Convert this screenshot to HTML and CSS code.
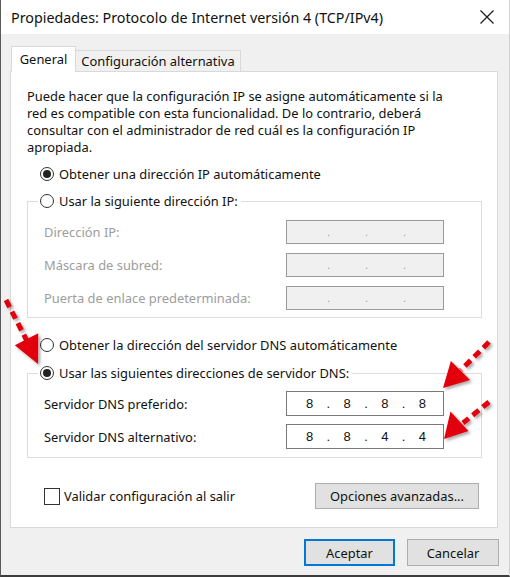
FILE: index.html
```html
<!DOCTYPE html>
<html lang="es">
<head>
<meta charset="utf-8">
<title>Propiedades</title>
<link rel="stylesheet" href="styles.css">
</head>
<body>
<div class="window">
  <div class="titlebar">
    <span class="title">Propiedades: Protocolo de Internet versión 4 (TCP/IPv4)</span>
    <svg class="close" width="14" height="14" viewBox="0 0 14 14"><path d="M0.5 0.5 L13.5 13.5 M13.5 0.5 L0.5 13.5" stroke="#1a1a1a" stroke-width="1.2" fill="none"/></svg>
  </div>
  <div class="body">
    <div class="tabs">
      <div class="tab active">General</div>
      <div class="tab">Configuración alternativa</div>
    </div>
    <div class="panel">
      <p class="desc">Puede hacer que la configuración IP se asigne automáticamente si la<br>red es compatible con esta funcionalidad. De lo contrario, deberá<br>consultar con el administrador de red cuál es la configuración IP<br>apropiada.</p>

      <div class="radio-row first"><span class="radio checked"></span><span>Obtener una dirección IP automáticamente</span></div>

      <fieldset class="group ip">
        <legend><span class="radio"></span><span>Usar la siguiente dirección IP:</span></legend>
        <div class="row"><span class="lbl disabled">Dirección IP:</span><span class="ipbox off"><i>.</i><i>.</i><i>.</i></span></div>
        <div class="row"><span class="lbl disabled">Máscara de subred:</span><span class="ipbox off"><i>.</i><i>.</i><i>.</i></span></div>
        <div class="row"><span class="lbl disabled">Puerta de enlace predeterminada:</span><span class="ipbox off"><i>.</i><i>.</i><i>.</i></span></div>
      </fieldset>

      <div class="radio-row dns"><span class="radio"></span><span>Obtener la dirección del servidor DNS automáticamente</span></div>

      <fieldset class="group dnsgroup">
        <legend><span class="radio checked"></span><span>Usar las siguientes direcciones de servidor DNS:</span></legend>
        <div class="row"><span class="lbl">Servidor DNS preferido:</span><span class="ipbox on"><b>8</b><i>.</i><b>8</b><i>.</i><b>8</b><i>.</i><b>8</b></span></div>
        <div class="row"><span class="lbl">Servidor DNS alternativo:</span><span class="ipbox on"><b>8</b><i>.</i><b>8</b><i>.</i><b>4</b><i>.</i><b>4</b></span></div>
      </fieldset>

      <div class="bottom-row">
        <label class="check"><span class="box"></span><span>Validar configuración al salir</span></label>
        <button class="btn adv">Opciones avanzadas...</button>
      </div>
    </div>
    <div class="footer">
      <button class="btn ok">Aceptar</button>
      <button class="btn">Cancelar</button>
    </div>
  </div>

  <svg class="arrows" width="510" height="577" viewBox="0 0 510 577">
    <defs>
      <filter id="sh" x="-20%" y="-20%" width="160%" height="160%">
        <feDropShadow dx="2" dy="2" stdDeviation="1.5" flood-color="#000" flood-opacity="0.35"/>
      </filter>
    </defs>
    <g filter="url(#sh)" fill="#e3000f" stroke="#e3000f">
      <line x1="6" y1="300" x2="27" y2="341" stroke-width="5" stroke-dasharray="8 5"/>
      <polygon points="38,364 14.8,345.3 38.2,333.3" stroke="none"/>
      <line x1="489" y1="342" x2="461" y2="370" stroke-width="5" stroke-dasharray="8 5"/>
      <polygon points="443,388 450.9,360.9 470.1,380.1" stroke="none"/>
      <line x1="489" y1="402" x2="463" y2="423" stroke-width="5" stroke-dasharray="8 5"/>
      <polygon points="444,439 450.5,411.5 468.5,431" stroke="none"/>
    </g>
  </svg>
</div>
</body>
</html>
```

FILE: styles.css
```css
* { box-sizing: border-box; }
html, body { margin: 0; padding: 0; background: #fff; }
body { font-family: "Noto Sans", "Open Sans", sans-serif; font-size: 12.9px; color: #111; }

.window {
  position: relative;
  width: 510px;
  height: 577px;
  background: #f0f0f0;
  border-left: 1px solid #5a5a5a;
  border-right: 1px solid #cfcfcf;
  border-bottom: 2px solid #3c3c3c;
  display: flex;
  flex-direction: column;
}

.titlebar {
  height: 34px;
  background: #fff;
  display: flex;
  align-items: center;
  justify-content: space-between;
  padding: 0 15px 0 10px;
}
.title { font-size: 14.3px; color: #111; }

.body { flex: 1; padding: 12px 0 0 9px; }

.tabs { display: flex; align-items: flex-end; height: 26px; margin-left: 1px; margin-bottom: -1px; }
.tab {
  height: 22px;
  padding: 0 4px;
  width: 165px;
  background: #f0f0f0;
  border: 1px solid #d9d9d9;
  border-left: none;
  display: flex;
  align-items: center;
  justify-content: center;
}
.tab.active {
  position: relative;
  z-index: 1;
  width: 65px;
  height: 26px;
  background: #fff;
  border-left: 1px solid #d9d9d9;
  border-bottom: none;
  padding-bottom: 2px;
}

.panel {
  width: 488px;
  height: 457px;
  background: #fff;
  border: 1px solid #d9d9d9;
  padding: 16px 10px 0 16px;
}

.desc { margin: 0; line-height: 17px; }

.radio-row { display: flex; align-items: center; height: 18px; padding-left: 13px; gap: 5px; }
.radio-row.first { margin-top: 9px; }
.radio-row.dns { margin-top: 18px; }

.radio {
  width: 14px; height: 14px;
  border: 1px solid #333;
  border-radius: 50%;
  background: #fff;
  display: inline-flex;
  align-items: center;
  justify-content: center;
  flex: none;
}
.radio.checked::after {
  content: "";
  width: 8px; height: 8px;
  border-radius: 50%;
  background: #222;
}

.group {
  margin: 9px 0 0 0;
  width: 455px;
  border: 1px solid #dcdcdc;
  padding: 10px 37px 7px 16px;
  min-inline-size: 0;
}
.group.dnsgroup { margin-top: 10px; padding-top: 9px; padding-bottom: 8px; }
.group legend {
  margin-left: -6px;
  padding: 0 3px 0 2px;
  height: 18px;
  display: flex;
  align-items: center;
  gap: 5px;
}

.row { display: flex; align-items: center; justify-content: space-between; height: 24px; }
.row + .row { margin-top: 9px; }
.dnsgroup .row { height: 25px; }
.dnsgroup .row + .row { margin-top: 8px; }

.lbl.disabled { color: #9d9d9d; }

.ipbox {
  width: 158px;
  height: 100%;
  display: flex;
  align-items: center;
  justify-content: space-between;
  font-family: "Liberation Sans", sans-serif;
  font-size: 13px;
}
.ipbox i { font-style: normal; }
.ipbox.off { background: #f0f0f0; border: 1px solid #9a9a9a; color: #999; padding: 0 37px 0 40px; }
.ipbox.off i { font-size: 11px; }
.ipbox.on { background: #fff; border: 1px solid #7a7a7a; color: #111; padding: 0 17px 0 19px; }
.ipbox.on b { font-weight: normal; }

.bottom-row {
  margin-top: 25px;
  display: flex;
  align-items: center;
  justify-content: space-between;
  padding: 0 8px 0 17px;
}
.check { display: flex; align-items: center; gap: 4px; }
.box { width: 16px; height: 17px; border: 1px solid #333; background: #fff; }

.btn {
  font-family: inherit;
  font-size: 12.9px;
  color: #111;
  background: #e1e1e1;
  border: 1px solid #adadad;
  height: 27px;
  width: 92px;
  padding: 0;
  margin: 0;
}
.btn.adv { width: 164px; height: 26px; }
.btn.ok { border: 2px solid #0078d7; width: 91px; }

.footer {
  margin-top: 11px;
  display: flex;
  justify-content: flex-end;
  gap: 12px;
  padding-right: 10px;
}

.arrows { position: absolute; left: -1px; top: 0; pointer-events: none; }
```
